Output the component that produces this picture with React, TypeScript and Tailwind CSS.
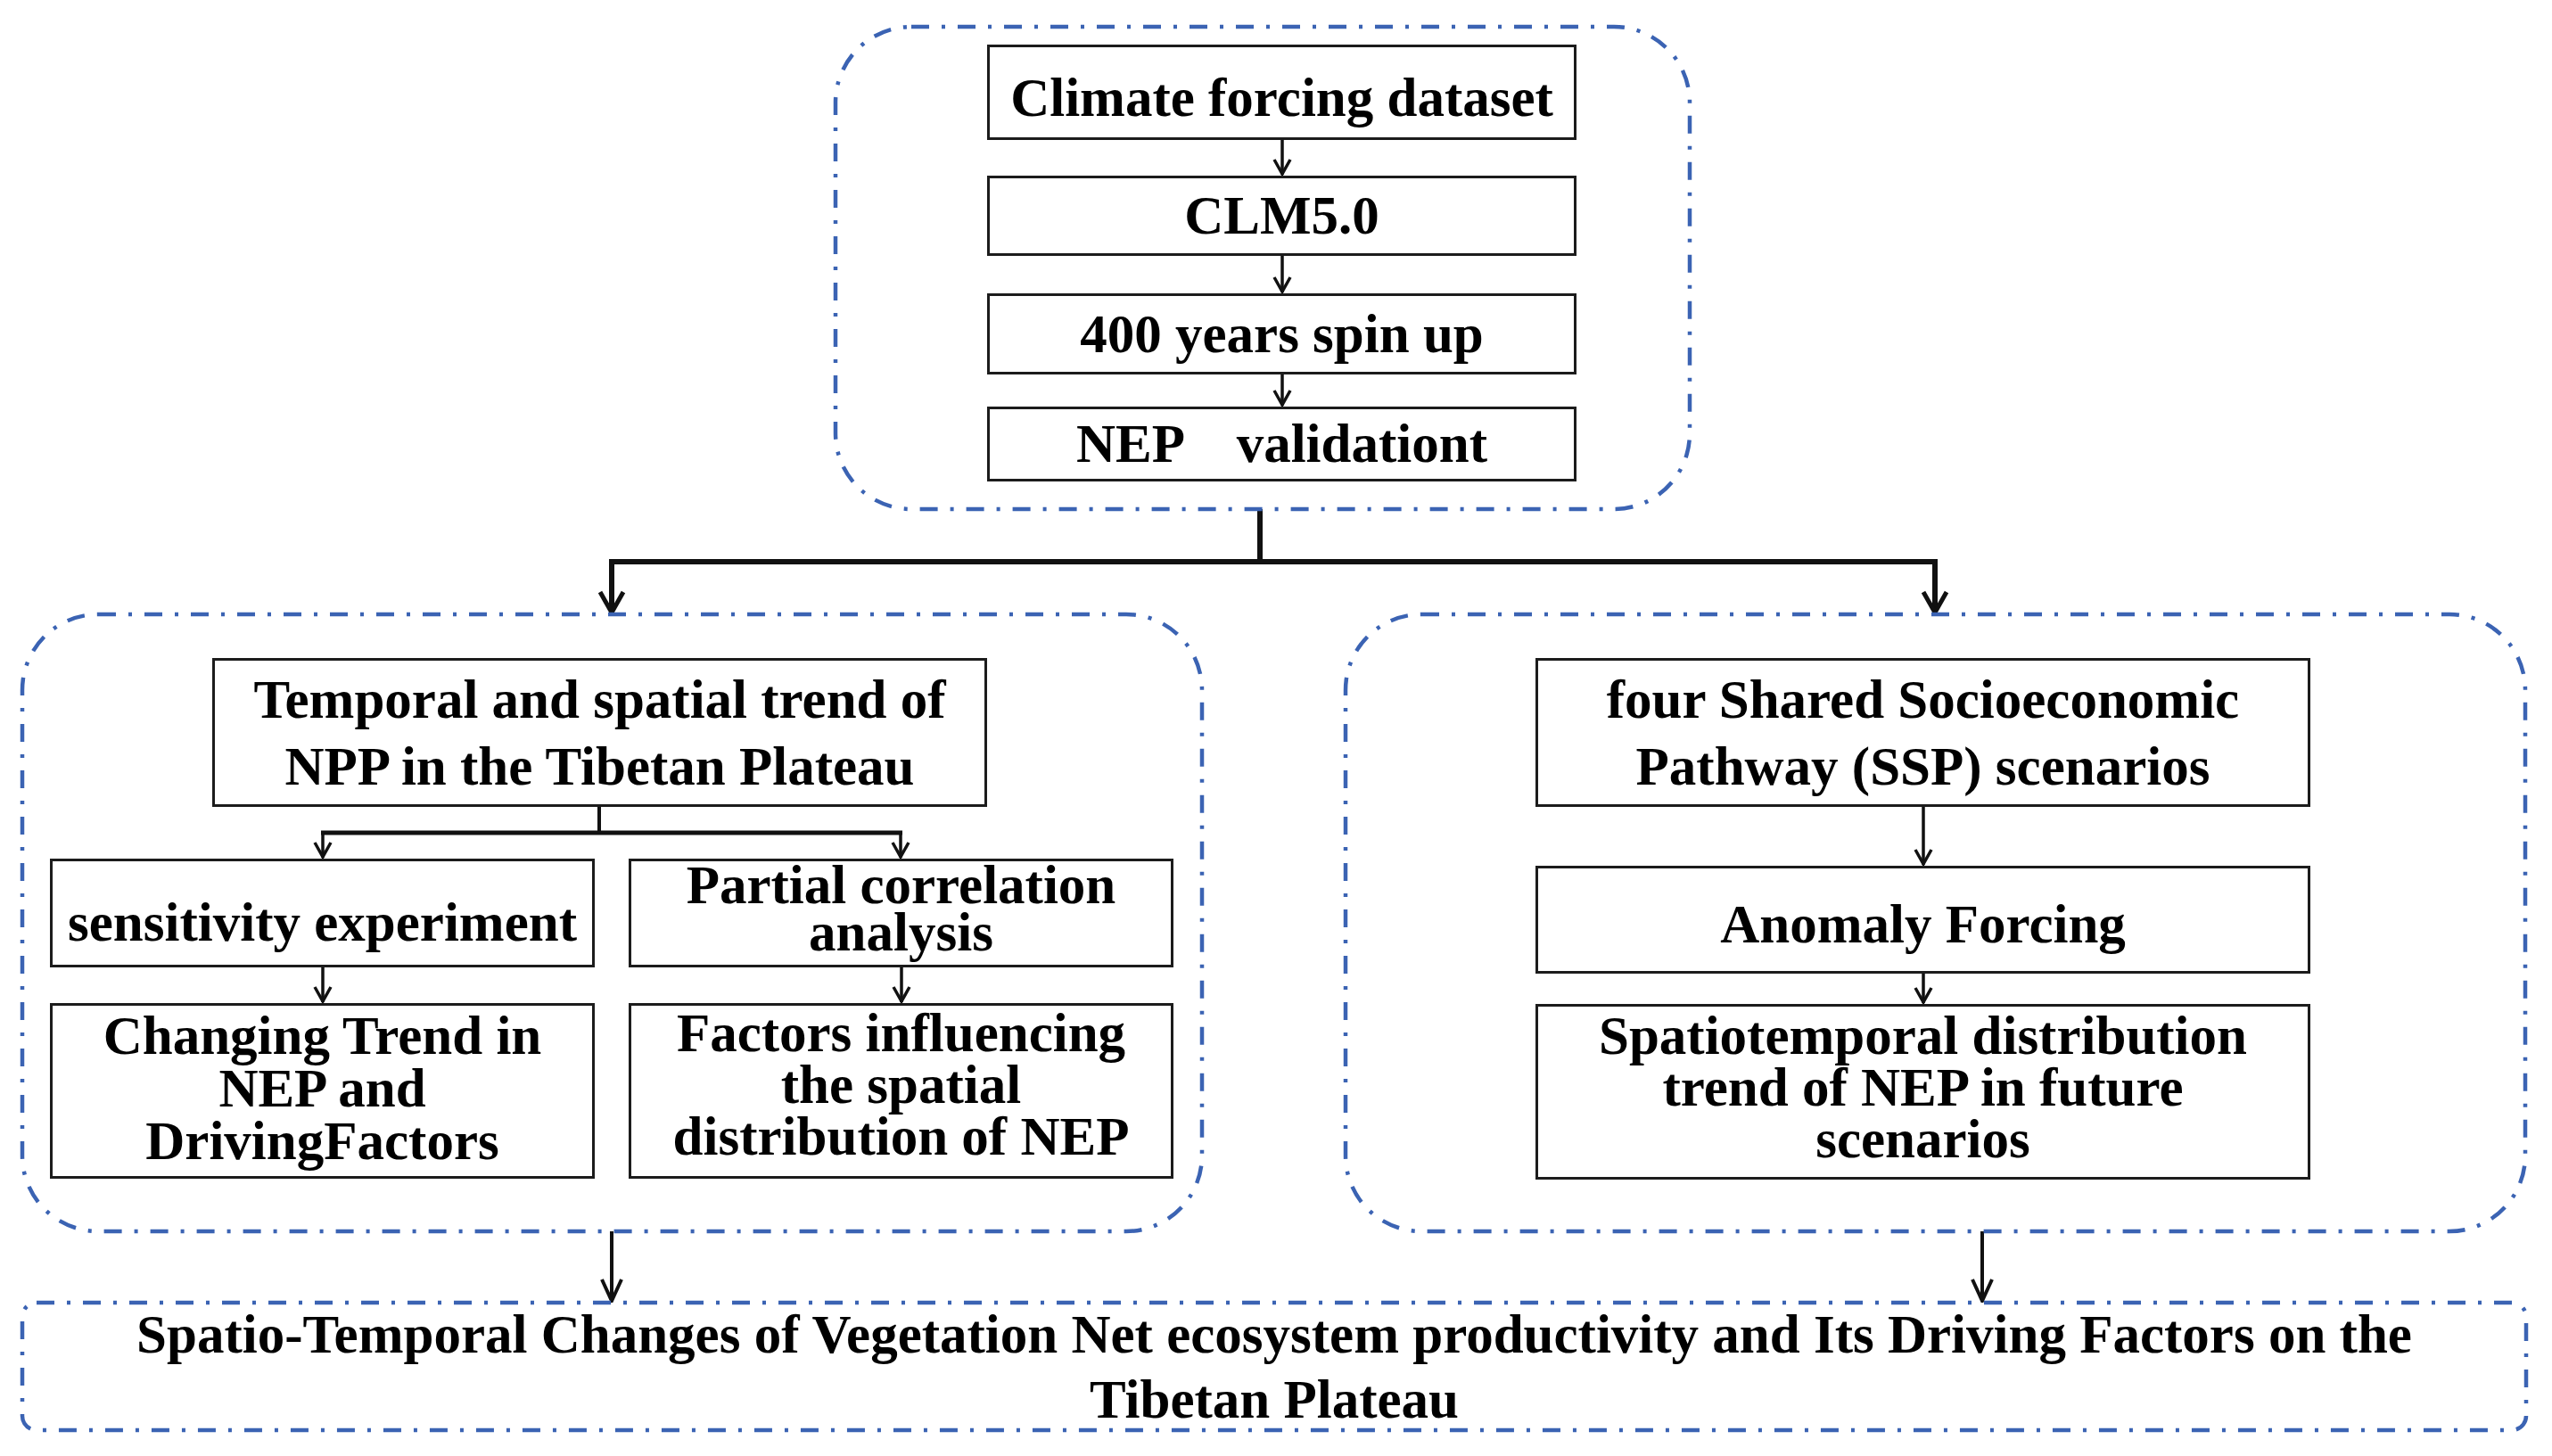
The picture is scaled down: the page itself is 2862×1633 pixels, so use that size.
import React from "react";

const STROKE = "#111111";

function DashBox({ className, rx, children }: { className: string; rx: number; children?: React.ReactNode }) {
  return (
    <div className={`relative ${className}`}>
      <svg className="absolute inset-0 w-full h-full overflow-visible pointer-events-none">
        <rect
          x="0"
          y="0"
          width="100%"
          height="100%"
          rx={rx}
          fill="none"
          stroke="#3b63b3"
          strokeWidth="4.5"
          strokeDasharray="20 14 4 14"
        />
      </svg>
      {children}
    </div>
  );
}

function Box({ className, children }: { className: string; children?: React.ReactNode }) {
  return (
    <div
      className={`box-border border-[3px] border-[#1c1c1c] flex flex-col items-center justify-center text-center whitespace-nowrap ${className}`}
    >
      {children}
    </div>
  );
}

function SmallArrow({ h }: { h: number }) {
  return (
    <div className="flex justify-center">
      <svg width="24" height={h} className="block">
        <line x1="12" y1="0" x2="12" y2={h - 1} stroke={STROKE} strokeWidth="3.5" />
        <polyline
          points={`3,${h - 18} 12,${h - 2} 21,${h - 18}`}
          fill="none"
          stroke={STROKE}
          strokeWidth="3.5"
        />
      </svg>
    </div>
  );
}

export default function App() {
  return (
    <div className="w-[2862px] h-[1633px] bg-white text-black font-['Liberation_Serif','Times_New_Roman',serif] font-bold text-[61px] overflow-hidden">
      {/* Top block */}
      <div className="pt-[30px] pl-[937px]">
        <DashBox className="w-[958px] h-[541px]" rx={85}>
          <div className="flex flex-col pl-[170px] pt-[20px] w-[831px] leading-[1.15]">
            <Box className="w-[661px] h-[107px] pt-[14px]">Climate forcing dataset</Box>
            <SmallArrow h={40} />
            <Box className="w-[661px] h-[90px]">CLM5.0</Box>
            <SmallArrow h={42} />
            <Box className="w-[661px] h-[91px] pt-[2px]">400 years spin up</Box>
            <SmallArrow h={36} />
            <Box className="w-[661px] h-[84px]">
              <span className="whitespace-pre">{"NEP    validationt"}</span>
            </Box>
          </div>
        </DashBox>
      </div>

      {/* Connector from top block to two branches */}
      <svg width="2862" height="118" className="block">
        <line x1="1413" y1="0" x2="1413" y2="59" stroke={STROKE} strokeWidth="6" />
        <line x1="683" y1="59" x2="2173" y2="59" stroke={STROKE} strokeWidth="6" />
        <line x1="686" y1="59" x2="686" y2="116" stroke={STROKE} strokeWidth="6" />
        <line x1="2170" y1="59" x2="2170" y2="116" stroke={STROKE} strokeWidth="6" />
        <polyline points="673,93 686,116 699,93" fill="none" stroke={STROKE} strokeWidth="5" />
        <polyline points="2157,93 2170,116 2183,93" fill="none" stroke={STROKE} strokeWidth="5" />
      </svg>

      {/* Middle row */}
      <div className="flex pl-[25px] gap-[161px]">
        {/* Left container */}
        <DashBox className="w-[1323px] h-[692px]" rx={85}>
          <div className="flex flex-col pt-[49px]">
            <div className="pl-[213px]">
              <Box className="w-[869px] h-[167px] leading-[75px]">
                <span>Temporal and spatial trend of</span>
                <span>NPP in the Tibetan Plateau</span>
              </Box>
            </div>
            <svg width="1323" height="58" className="block">
              <line x1="647" y1="0" x2="647" y2="29" stroke={STROKE} strokeWidth="4" />
              <line x1="335" y1="29" x2="987" y2="29" stroke={STROKE} strokeWidth="5" />
              <line x1="337" y1="29" x2="337" y2="57" stroke={STROKE} strokeWidth="3.5" />
              <line x1="985" y1="29" x2="985" y2="57" stroke={STROKE} strokeWidth="3.5" />
              <polyline points="328,40 337,56 346,40" fill="none" stroke={STROKE} strokeWidth="3.5" />
              <polyline points="976,40 985,56 994,40" fill="none" stroke={STROKE} strokeWidth="3.5" />
            </svg>
            <div className="flex pl-[31px] gap-[38px]">
              <div className="flex flex-col w-[611px]">
                <Box className="w-[611px] h-[122px] leading-[1.1] pt-[22px]">sensitivity experiment</Box>
                <SmallArrow h={40} />
                <Box className="w-[611px] h-[197px] leading-[59px] pb-[6px]">
                  <span>Changing Trend in</span>
                  <span>NEP and</span>
                  <span>DrivingFactors</span>
                </Box>
              </div>
              <div className="flex flex-col w-[611px]">
                <Box className="w-[611px] h-[122px] leading-[53px] pb-[10px]">
                  <span>Partial correlation</span>
                  <span>analysis</span>
                </Box>
                <SmallArrow h={40} />
                <Box className="w-[611px] h-[197px] leading-[58px] pb-[14px]">
                  <span>Factors influencing</span>
                  <span>the spatial</span>
                  <span>distribution of NEP</span>
                </Box>
              </div>
            </div>
          </div>
        </DashBox>

        {/* Right container */}
        <DashBox className="w-[1323px] h-[692px]" rx={85}>
          <div className="flex flex-col pt-[49px] pl-[213px] w-[1082px]">
            <Box className="w-[869px] h-[167px] leading-[75px]">
              <span>four Shared Socioeconomic</span>
              <span>Pathway (SSP) scenarios</span>
            </Box>
            <SmallArrow h={66} />
            <Box className="w-[869px] h-[121px] leading-[1.1] pt-[10px]">Anomaly Forcing</Box>
            <SmallArrow h={34} />
            <Box className="w-[869px] h-[197px] leading-[58px] pb-[10px]">
              <span>Spatiotemporal distribution</span>
              <span>trend of NEP in future</span>
              <span>scenarios</span>
            </Box>
          </div>
        </DashBox>
      </div>

      {/* Connector to bottom */}
      <svg width="2862" height="80" className="block">
        <line x1="686" y1="0" x2="686" y2="78" stroke={STROKE} strokeWidth="4" />
        <line x1="2223" y1="0" x2="2223" y2="78" stroke={STROKE} strokeWidth="4" />
        <polyline points="675,54 686,78 697,54" fill="none" stroke={STROKE} strokeWidth="4" />
        <polyline points="2212,54 2223,78 2234,54" fill="none" stroke={STROKE} strokeWidth="4" />
      </svg>

      {/* Bottom title */}
      <div className="pl-[25px]">
        <DashBox className="w-[2808px] h-[143px]" rx={16}>
          <div className="w-full h-full flex flex-col items-center justify-center text-center leading-[73px] whitespace-nowrap">
            <span>Spatio-Temporal Changes of Vegetation Net ecosystem productivity and Its Driving Factors on the</span>
            <span>Tibetan Plateau</span>
          </div>
        </DashBox>
      </div>
    </div>
  );
}
